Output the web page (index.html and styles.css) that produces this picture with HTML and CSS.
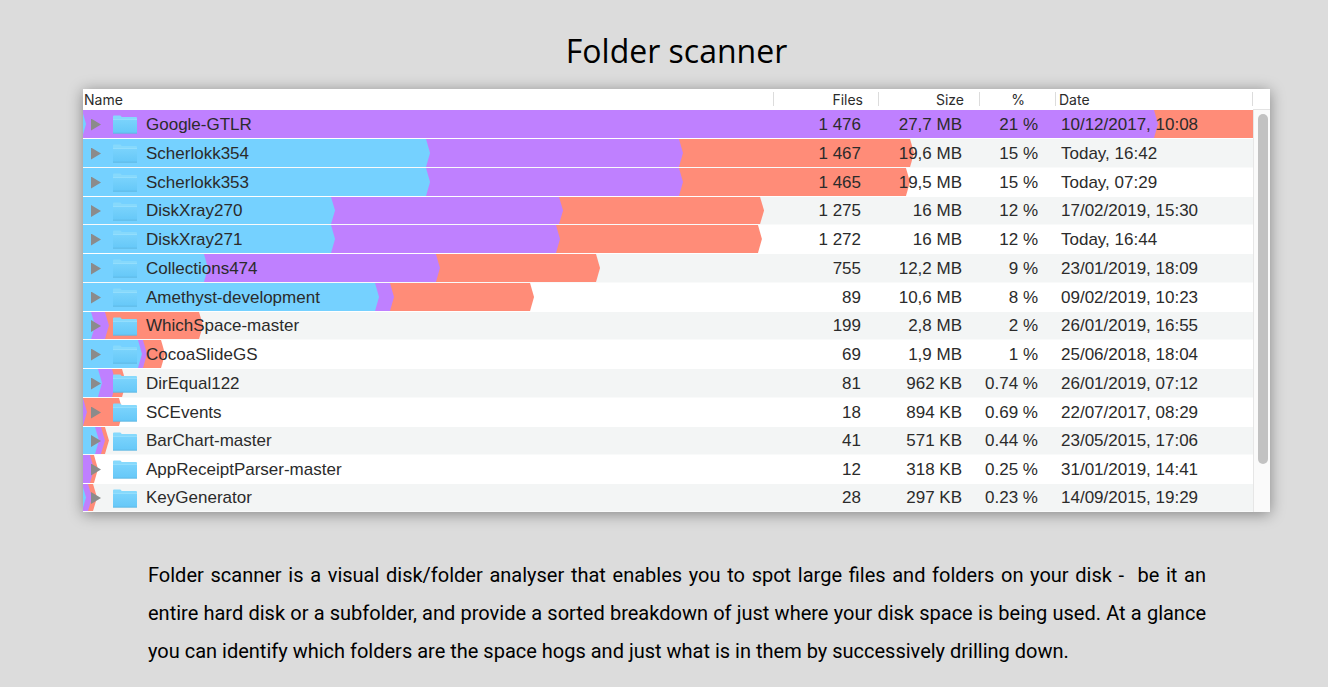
FILE: index.html
```
<!DOCTYPE html>
<html lang="en">
<head>
<meta charset="UTF-8">
<meta name="viewport" content="width=device-width, initial-scale=1">
<title>Folder scanner</title>
<link rel="stylesheet" href="styles.css">
</head>
<body>
<svg class="defs" width="0" height="0" aria-hidden="true">
  <defs>
    <linearGradient id="folderFill" x1="0" y1="0" x2="0" y2="1">
      <stop offset="0" stop-color="#7ad3fc"/>
      <stop offset="1" stop-color="#66c8f8"/>
    </linearGradient>
    <symbol id="folder" viewBox="0 0 24 19">
      <path d="M0 18V1.5Q0 .5 1 .5H7Q7.8 .5 8.2 1.3L8.6 2H23Q24 2 24 3V18Z" fill="#86d9fc"/>
      <path d="M0 4.5H24V18H0Z" fill="url(#folderFill)"/>
      <path d="M0 4.5H24" stroke="#93defd" stroke-width="1"/>
      <path d="M0 18.2H24" stroke="#5fb8e4" stroke-width="1"/>
    </symbol>
  </defs>
</svg>

<section class="scanner">
  <h2>Folder scanner</h2>

  <div class="window">
    <table>
      <colgroup>
        <col>
        <col class="col-files">
        <col class="col-size">
        <col class="col-percent">
        <col class="col-date">
      </colgroup>
      <thead>
        <tr>
          <th class="name">Name</th>
          <th class="files">Files</th>
          <th class="size">Size</th>
          <th class="percent">%</th>
          <th class="date">Date</th>
        </tr>
      </thead>
      <tbody id="folderRows"></tbody>
    </table>
    <div class="scrollbar"><div class="track"><div class="thumb"></div></div></div>
  </div>

  <p>Folder scanner is a visual disk/folder analyser that enables you to spot large files and folders on your disk -&nbsp; be it an entire hard disk or a subfolder, and provide a sorted breakdown of just where your disk space is being used. At a glance you can identify which folders are the space hogs and just what is in them by successively drilling down.</p>
</section>

<script>
// name, files, size, percent, date, bar ends (blue, purple, coral)
const folders = [
  ['Google-GTLR', '1 476', '27,7 MB', '21 %', '10/12/2017, 10:08', [3, 1075, 1180]],
  ['Scherlokk354', '1 467', '19,6 MB', '15 %', 'Today, 16:42', [347, 600, 831]],
  ['Scherlokk353', '1 465', '19,5 MB', '15 %', 'Today, 07:29', [347, 600, 827]],
  ['DiskXray270', '1 275', '16 MB', '12 %', '17/02/2019, 15:30', [252, 480, 681]],
  ['DiskXray271', '1 272', '16 MB', '12 %', 'Today, 16:44', [252, 477, 679]],
  ['Collections474', '755', '12,2 MB', '9 %', '23/01/2019, 18:09', [125, 357, 517]],
  ['Amethyst-development', '89', '10,6 MB', '8 %', '09/02/2019, 10:23', [296, 311, 451]],
  ['WhichSpace-master', '199', '2,8 MB', '2 %', '26/01/2019, 16:55', [12, 26, 120]],
  ['CocoaSlideGS', '69', '1,9 MB', '1 %', '25/06/2018, 18:04', [59, 64, 82]],
  ['DirEqual122', '81', '962 KB', '0.74 %', '26/01/2019, 07:12', [19, 33, 43]],
  ['SCEvents', '18', '894 KB', '0.69 %', '22/07/2017, 08:29', [0, 4, 40]],
  ['BarChart-master', '41', '571 KB', '0.44 %', '23/05/2015, 17:06', [16, 22, 26]],
  ['AppReceiptParser-master', '12', '318 KB', '0.25 %', '31/01/2019, 14:41', [0, 11, 15]],
  ['KeyGenerator', '28', '297 KB', '0.23 %', '14/09/2015, 19:29', [3, 9, 14]]
];
const barScale = 1170;

function barWidth(end) {
  return (end / barScale * 100).toFixed(2) + '%';
}

document.getElementById('folderRows').innerHTML = folders.map(([name, files, size, percent, date, ends]) => `
  <tr>
    <td class="name">
      <div class="bars">
        <div class="bar coral" style="width: ${barWidth(ends[2])}"></div>
        <div class="bar purple" style="width: ${barWidth(ends[1])}"></div>
        <div class="bar blue" style="width: ${barWidth(ends[0])}"></div>
      </div>
      <div class="entry">
        <button class="expand" aria-label="Expand ${name}"></button>
        <svg class="folder" aria-hidden="true"><use href="#folder"/></svg>
        <span>${name}</span>
      </div>
    </td>
    <td class="files"><span>${files}</span></td>
    <td class="size"><span>${size}</span></td>
    <td class="percent"><span>${percent}</span></td>
    <td class="date"><span>${date}</span></td>
  </tr>`).join('');
</script>
</body>
</html>
```
FILE: styles.css
```
* { box-sizing: border-box; }
body { background: #dcdcdc; margin: 0; color: #000; }
.defs { display: block; }
.scanner { padding: 30px 58px 16px 83px; }
h2 { margin: 0 0 17px; text-align: center; font: 500 32px/42px "Open Sans", sans-serif; }

.window { display: flex; background: #fff; box-shadow: 0 2px 14px rgba(0,0,0,0.4); }
table { flex: 1; min-width: 0; border-collapse: separate; border-spacing: 0; table-layout: fixed; font: 17px/20px "Liberation Sans", Arial, sans-serif; color: #2b2b2b; }
.col-files { width: 105px; }
.col-size { width: 101px; }
.col-percent { width: 76px; }
.col-date { width: 197px; }

th { height: 21px; padding: 0 16px 0 1px; font: 400 14px/20px Inter, sans-serif; text-align: right; white-space: nowrap; background: linear-gradient(#dcdcdc, #dcdcdc) right 3px / 1px 14px no-repeat; }
th.name, th.date { text-align: left; }
th.date { padding-left: 3px; }
th.percent { text-align: center; padding: 0; }

tbody tr { position: relative; background: #fff; }
tbody tr:nth-child(even) { background: #f3f5f5; }
td { height: 29px; padding: 0 18px 0 0; text-align: right; white-space: nowrap; }
tr:nth-child(4n) td, tr:last-child td { height: 28px; }
td.name { padding: 0 0 0 8px; text-align: left; }
td.date { padding: 0 0 0 5px; text-align: left; }
td span { position: relative; }

.bars { position: absolute; inset: 0; overflow: hidden; border-bottom: 1px solid #fff; }
tr:nth-child(even) .bars { border-color: #f9fafa; }
.bar { position: absolute; top: 0; bottom: 0; left: 0; clip-path: polygon(0 0, calc(100% - 4px) 0, 100% 50%, calc(100% - 4px) 100%, 0 100%); }
.coral { background: #ff8c78; }
.purple { background: #bf80ff; }
.blue { background: #75d1ff; }

.entry { position: relative; display: flex; align-items: center; }
.expand { width: 10px; height: 12px; padding: 0; border: 0; background: #8b8b8b; clip-path: polygon(0 0, 100% 50%, 0 100%); cursor: pointer; }
.folder { width: 24px; height: 19px; margin: 0 9px 0 12px; }

.scrollbar { width: 17px; padding-top: 20px; display: flex; }
.track { flex: 1; padding: 4px 2px 0 4px; background: #fafafa; border-top: 1px solid #e3e3e3; border-left: 1px solid #e6e6e6; }
.thumb { height: 88%; border-radius: 5px; background: #c2c2c2; }

p { margin: 44px 64px 0 65px; font: 20px/38px Roboto, sans-serif; text-align: justify; }
```
